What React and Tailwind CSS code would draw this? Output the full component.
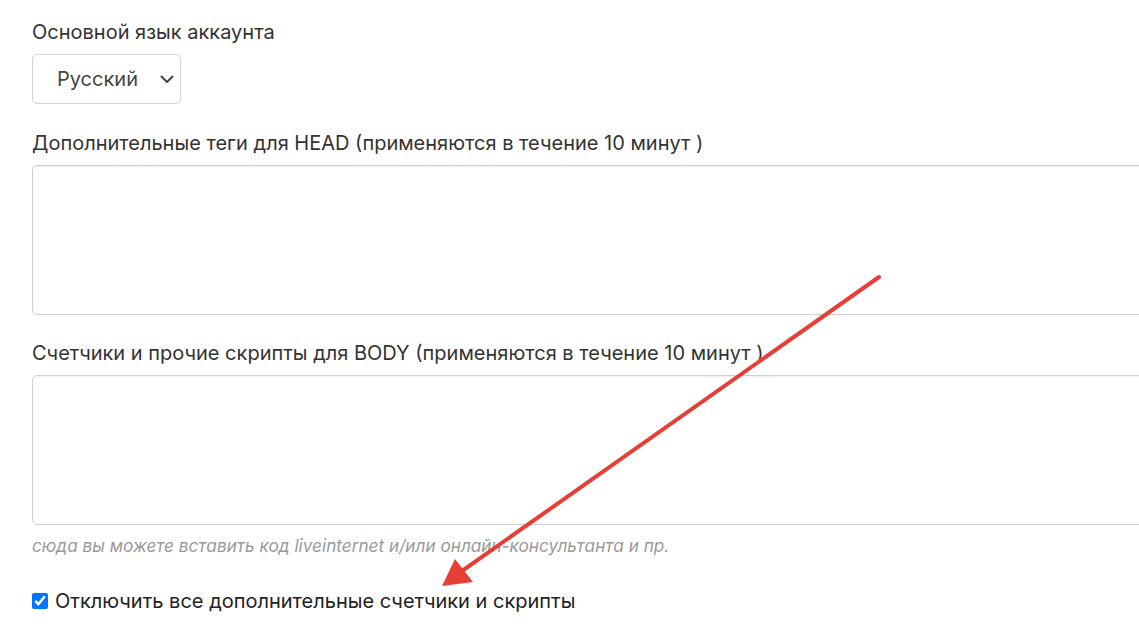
import React from "react";

export default function App() {
  return (
    <div className="w-[1139px] h-[637px] overflow-hidden bg-white relative text-[#333333]" style={{ fontFamily: "Inter, 'Noto Sans', sans-serif" }}>
      <div className="pl-[32px] pt-[19px] flex flex-col w-[1300px]">
        <label className="text-[20px] leading-[26px]">Основной язык аккаунта</label>
        <div className="mt-[9px] w-[149px] h-[50px] border border-[#d4d4d4] rounded-[5px] flex items-center justify-between pl-[24px] pr-[6px] text-[20px] text-[#444]">
          <span>Русский</span>
          <svg width="14" height="9" viewBox="0 0 14 9" fill="none"><path d="M1.5 1.5 L7 7 L12.5 1.5" stroke="#444" strokeWidth="2" strokeLinecap="round" strokeLinejoin="round" /></svg>
        </div>
        <label className="mt-[26px] text-[20px] leading-[26px]">Дополнительные теги для HEAD (применяются в течение 10 минут )</label>
        <div className="mt-[9px] h-[150px] border border-[#cfcfcf] rounded-[5px] shadow-[inset_0_1px_2px_rgba(0,0,0,0.08)]"></div>
        <label className="mt-[25px] text-[20px] leading-[26px]">Счетчики и прочие скрипты для BODY (применяются в течение 10 минут )</label>
        <div className="mt-[9px] h-[150px] border border-[#cfcfcf] rounded-[5px] shadow-[inset_0_1px_2px_rgba(0,0,0,0.08)]"></div>
        <p className="mt-[10px] text-[17.2px] leading-[22px] italic text-[#9a9a9a]">сюда вы можете вставить код liveinternet и/или онлайн-консультанта и пр.</p>
        <div className="mt-[31px] flex items-center gap-[7px]">
          <input type="checkbox" defaultChecked className="w-[16px] h-[16px] m-0 accent-[#0075ff]" />
          <span className="text-[20px] leading-[26px] text-[#222]">Отключить все дополнительные счетчики и скрипты</span>
        </div>
      </div>
      <svg className="absolute left-0 top-0 pointer-events-none" width="1139" height="637">
        <line x1="879" y1="277" x2="462" y2="571" stroke="#e53f36" strokeWidth="4" strokeLinecap="round" />
        <polygon points="442,586 455,559 473,582" fill="#e53f36" />
      </svg>
    </div>
  );
}
